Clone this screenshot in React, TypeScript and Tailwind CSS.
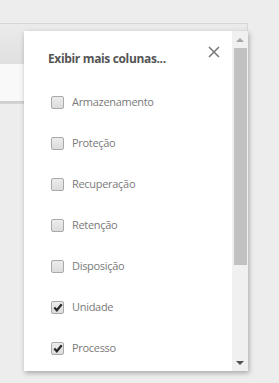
import React from "react";

const items: { label: string; checked: boolean }[] = [
  { label: "Armazenamento", checked: false },
  { label: "Proteção", checked: false },
  { label: "Recuperação", checked: false },
  { label: "Retenção", checked: false },
  { label: "Disposição", checked: false },
  { label: "Unidade", checked: true },
  { label: "Processo", checked: true },
];

function Box({ checked }: { checked: boolean }) {
  return (
    <div className="w-[13px] h-[13px] rounded-[2px] border border-[#a9a9a9] bg-gradient-to-b from-[#ececec] to-[#dcdcdc] flex items-center justify-center shrink-0">
      {checked && (
        <svg width="10" height="9" viewBox="0 0 10 9">
          <path d="M1.3 4.6 L3.8 7.3 L8.7 1.2" fill="none" stroke="#2a2a2a" strokeWidth="2.2" />
        </svg>
      )}
    </div>
  );
}

export default function App() {
  return (
    <div className="relative w-[279px] h-[383px] bg-[#ededed] overflow-hidden" style={{ fontFamily: '"Open Sans", "Noto Sans", sans-serif' }}>
      <div className="pt-[23px]">
        <div className="w-[248px] border border-l-0 border-[#d6d6d6]">
          <div className="h-[40px] bg-gradient-to-b from-[#ebebeb] to-[#e0e0e0]" />
          <div className="h-[39px] bg-[#f9f9f9] border-b-2 border-[#d0d0d0]" />
        </div>
      </div>
      <div className="absolute left-[24px] top-[31px] w-[224px] h-[340px] bg-white shadow-[1px_2px_5px_rgba(0,0,0,0.3)] flex">
        <div className="flex-1 flex flex-col">
          <div className="flex items-start justify-between pl-[24px] pr-[12px] pt-[16px]">
            <div className="text-[12px] font-bold text-[#555] tracking-[-0.35px] mt-[3px]">Exibir mais colunas...</div>
            <svg width="12" height="12" viewBox="0 0 12 12" className="mt-[-1px]">
              <path d="M1 1 L11 11 M11 1 L1 11" stroke="#7a7a7a" strokeWidth="1.6" />
            </svg>
          </div>
          <div className="flex flex-col gap-[22px] pl-[27px] mt-[25px]">
            {items.map((it) => (
              <div key={it.label} className="flex items-center gap-[8px] h-[19px]">
                <Box checked={it.checked} />
                <span className="text-[11px] text-[#7a7a7a] tracking-[-0.3px]">{it.label}</span>
              </div>
            ))}
          </div>
        </div>
        <div className="w-[16px] bg-[#f0f0f0] flex flex-col items-center">
          <div className="h-[17px] flex items-center justify-center">
            <svg width="8" height="4" viewBox="0 0 8 4"><path d="M0 4 L4 0 L8 4 Z" fill="#a3a3a3" /></svg>
          </div>
          <div className="w-[13px] h-[217px] bg-[#c1c1c1]" />
          <div className="flex-1" />
          <div className="h-[17px] flex items-center justify-center">
            <svg width="8" height="4" viewBox="0 0 8 4"><path d="M0 0 L8 0 L4 4 Z" fill="#505050" /></svg>
          </div>
        </div>
      </div>
    </div>
  );
}
